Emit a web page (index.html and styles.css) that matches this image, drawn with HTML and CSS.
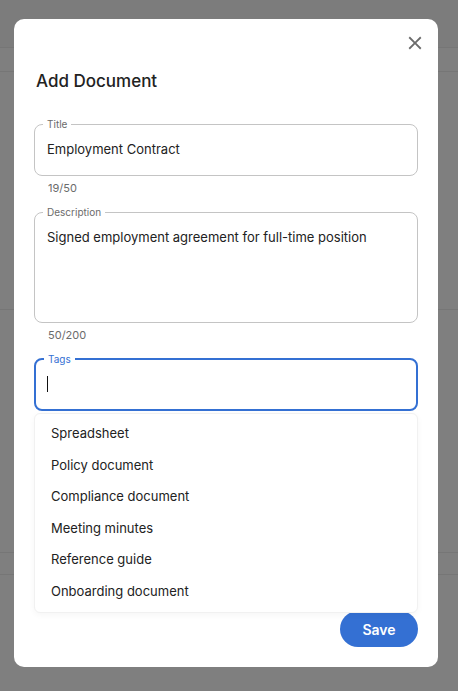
FILE: index.html
```html
<!DOCTYPE html>
<html lang="en">
<head>
    <meta charset="UTF-8">
    <meta name="viewport" content="width=device-width, initial-scale=1.0">
    <title>Add Document</title>
    <link rel="stylesheet" href="styles.css">
</head>
<body>
    <!-- page behind the dialog -->
    <div class="page">
        <div class="page-head"></div>
        <div class="page-row short"></div>
        <div class="page-row tall"></div>
        <div class="page-row taller"></div>
        <div class="page-row thin"></div>
    </div>

    <div class="backdrop">
        <div class="dialog">
            <div class="dialog-head">
                <button class="close-btn" aria-label="Close">
                    <svg viewBox="0 0 24 24" width="22" height="22">
                        <path d="M19 6.41 17.59 5 12 10.59 6.41 5 5 6.41 10.59 12 5 17.59 6.41 19 12 13.41 17.59 19 19 17.59 13.41 12z" fill="currentColor"/>
                    </svg>
                </button>
            </div>

            <h2 class="dialog-title">Add Document</h2>

            <fieldset class="field">
                <legend>Title</legend>
                <div class="field-value">Employment Contract</div>
            </fieldset>
            <div class="helper">19/50</div>

            <fieldset class="field multiline">
                <legend>Description</legend>
                <div class="field-value">Signed employment agreement for full-time position</div>
            </fieldset>
            <div class="helper">50/200</div>

            <div class="tags-wrap">
                <fieldset class="field focused">
                    <legend>Tags</legend>
                    <div class="field-value"><span class="caret"></span></div>
                </fieldset>

                <ul class="menu">
                    <li>Spreadsheet</li>
                    <li>Policy document</li>
                    <li>Compliance document</li>
                    <li>Meeting minutes</li>
                    <li>Reference guide</li>
                    <li>Onboarding document</li>
                </ul>
            </div>

            <div class="dialog-actions">
                <button class="save-btn">Save</button>
            </div>
        </div>
    </div>
</body>
</html>
```

FILE: styles.css
```css
* {
    box-sizing: border-box;
}
body {
    margin: 0;
    font-family: Inter, "Noto Sans", sans-serif;
    color: #212121;
    background: #fff;
}
.page-head {
    height: 48px;
    background: #f8f8f8;
    border-bottom: 1px solid #ececec;
}
.page-row {
    border-bottom: 1px solid #ececec;
}
.page-row.short {
    height: 24px;
}
.page-row.tall {
    height: 238px;
}
.page-row.taller {
    height: 243px;
}
.page-row.thin {
    height: 22px;
}
.backdrop {
    position: fixed;
    inset: 0;
    background: rgba(0, 0, 0, 0.5);
    padding: 19px 20px 24px 14px;
}
.dialog {
    display: flex;
    flex-direction: column;
    width: 424px;
    height: 648px;
    background: #fff;
    border-radius: 10px;
    padding: 0 20px 20px;
}
.dialog-head {
    display: flex;
    justify-content: flex-end;
    padding-top: 13px;
    margin-right: -8px;
}
.close-btn {
    display: flex;
    padding: 0;
    border: none;
    background: none;
    color: #6b6b6b;
    cursor: pointer;
}
.dialog-title {
    margin: 15px 0 0;
    padding-left: 2px;
    font-size: 17px;
    line-height: 24px;
    font-weight: 500;
    color: #222;
}
.field {
    margin: 0;
    padding: 0 12px 6px;
    border: 1px solid #c4c4c4;
    border-radius: 8px;
    min-width: 0;
}
.dialog-title + .field {
    margin-top: 25px;
}
.field legend {
    margin-left: -4px;
    padding: 0 4px;
    font-size: 10px;
    line-height: 12px;
    color: #6b6b6b;
}
.field-value {
    height: 39px;
    font-size: 13px;
    line-height: 39px;
    color: #222;
}
.field.multiline .field-value {
    height: 98px;
    padding-top: 9px;
    line-height: 20px;
}
.field.focused {
    padding-left: 11px;
    border: 2px solid #3470d3;
}
.field.focused legend {
    margin-left: -3px;
    color: #3470d3;
}
.field.focused .field-value {
    display: flex;
    align-items: center;
    height: 38px;
}
.caret {
    width: 1px;
    height: 16px;
    background: #111;
}
.helper {
    margin: 4px 0 0 14px;
    font-size: 11px;
    line-height: 16px;
    color: #6b6b6b;
}
.helper + .field {
    margin-top: 10px;
}
.tags-wrap {
    position: relative;
    margin-top: 10px;
}
.menu {
    position: absolute;
    top: calc(100% + 2px);
    left: 0;
    right: 0;
    z-index: 2;
    margin: 0;
    padding: 4px 0;
    list-style: none;
    background: #fff;
    border: 1px solid #f1f1f1;
    border-radius: 6px;
    box-shadow: 0 2px 6px rgba(0, 0, 0, 0.04);
}
.menu li {
    padding: 6px 16px;
    font-size: 13px;
    line-height: 19.6px;
    color: #222;
}
.dialog-actions {
    display: flex;
    justify-content: flex-end;
    margin-top: auto;
}
.save-btn {
    width: 78px;
    height: 36px;
    border: none;
    border-radius: 18px;
    background: #3470d3;
    color: #fff;
    font-family: inherit;
    font-size: 14px;
    font-weight: 600;
    cursor: pointer;
}
```
